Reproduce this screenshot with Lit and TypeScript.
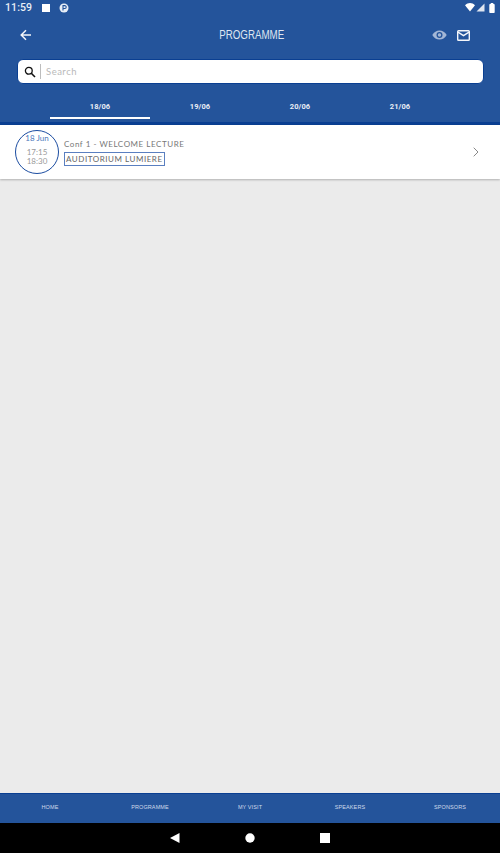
import { LitElement, html, css } from "lit";
import { customElement } from "lit/decorators.js";

@customElement("app-root")
export class AppRoot extends LitElement {
  static styles = css`
    :host { display: flex; flex-direction: column; width: 500px; height: 853px; background: #ebebeb; font-family: "Roboto", sans-serif; overflow: hidden; }
    svg { display: block; }
    .top { background: #24549b; border-bottom: 3px solid #0a3f92; height: 122px; display: flex; flex-direction: column; flex: none; }
    .status { height: 15px; display: flex; align-items: center; padding: 0 5px; color: #e8eef6; font-size: 10.5px; font-weight: 500; gap: 9px; }
    .status .time { letter-spacing: 0.1px; }
    .status .sp { flex: 1; }
    .status .right { display: flex; align-items: center; gap: 1px; }
    .sq { width: 8px; height: 8px; background: #fff; margin-left: 1px; }
    .appbar { height: 40px; display: flex; align-items: center; padding: 0 20px; position: relative; margin-top: 0; }
    .title { flex: 1; text-align: center; color: #dfe6f1; font-family: "Liberation Sans Narrow", "Liberation Sans", sans-serif; font-size: 12.5px; }
    .title span { display: inline-block; transform: scaleX(0.78); }
    .acts { display: flex; align-items: center; gap: 10px; padding-right: 10px; margin-left: -40px; }
    .search { margin: 5px 17px 0; height: 25px; background: #fff; border-radius: 6px; border: 1px solid #0a3f92; margin-top: 4px; box-sizing: border-box; width: 467px; display: flex; align-items: center; padding-left: 6px; }
    .bar { width: 1px; height: 15px; background: #bdbdbd; margin: 0 5px 0 4px; }
    .ph { font-family: "Lato", sans-serif; color: #b9b9b9; font-size: 9.5px; letter-spacing: 0.5px; }
    .tabs { display: flex; padding-left: 50px; margin-top: 15px; flex: 1; }
    .tab { width: 100px; box-sizing: border-box; text-align: center; color: #e9eef6; font-size: 7.5px; font-weight: 700; padding-top: 3px; letter-spacing: 0.1px; height: 20px; }
    .tab.on { border-bottom: 2px solid #fff; }
    .row { height: 54px; background: #fff; box-shadow: 0 1px 2px rgba(0,0,0,.25); display: flex; align-items: center; padding-left: 15px; flex: none; }
    .row { margin-top: 0; }
    .circle { width: 44px; height: 44px; box-sizing: border-box; border: 1.5px solid #1c4da1; border-radius: 50%; display: flex; flex-direction: column; align-items: center; font-family: "Lato", sans-serif; font-size: 8px; color: #999; line-height: 9px; flex: none; padding-top: 2.5px; }
    .circle .d { color: #4c78bb; margin-bottom: 5px; }
    .info { margin-left: 5px; display: flex; flex-direction: column; gap: 3px; font-family: "Lato", sans-serif; font-size: 8px; color: #777; letter-spacing: 0.55px; flex: 1; }
    .room { align-self: flex-start; border: 1px solid #5a7fc0; padding: 1px 1px; line-height: 10px; color: #666; }
    .chev { margin-right: 21px; }
    .main { flex: 1; }
    .nav { height: 30px; background: #24549b; border-top: 1px solid #0a3f92; box-sizing: border-box; display: flex; flex: none; }
    .nav div { width: 100px; text-align: center; color: #cfdaea; font-family: "Liberation Sans", sans-serif; font-size: 5.5px; line-height: 27px; letter-spacing: 0.1px; }
    .sys { height: 30px; background: #000; flex: none; display: flex; align-items: center; justify-content: center; gap: 65px; padding-left: 0; }
  `;
  render() {
    return html`
      <div class="top">
        <div class="status">
          <span class="time">11:59</span>
          <span class="sq"></span>
          <svg width="10" height="10" viewBox="0 0 10 10"><circle cx="5" cy="5" r="4.5" fill="#e8eef6"/><path d="M4 7.5V2.6h1.8a1.3 1.3 0 0 1 0 2.9H4" fill="none" stroke="#24549b" stroke-width="1.1"/></svg>
          <span class="sp"></span>
          <span class="right">
            <svg width="10" height="9" viewBox="0 0 10 9"><path d="M0 2.2C3-.6 7-.6 10 2.2L5 8.5z" fill="#fff"/></svg>
            <svg width="9" height="9" viewBox="0 0 9 9"><path d="M8.5 .5V8.5H.5z" fill="#dfe6f1"/></svg>
            <svg width="6" height="10" viewBox="0 0 6 10" style="margin-left:3px"><rect x=".3" y="1" width="5.4" height="9" rx=".8" fill="#fff"/><rect x="1.7" y="0" width="2.6" height="1.5" fill="#fff"/></svg>
          </span>
        </div>
        <div class="appbar">
          <svg width="12" height="12" viewBox="0 0 12 12"><path d="M11 6H1.6M6 1.2 1.2 6 6 10.8" fill="none" stroke="#f4f6fa" stroke-width="1.5"/></svg>
          <div class="title"><span>PROGRAMME</span></div>
          <div class="acts">
            <svg width="15" height="10" viewBox="0 0 15 10"><path d="M.3 5C2 2 4.500.5 7.500.5S13 2 14.700 5c-1.700 3-4.200 4.500-7.200 4.500S2 8 .3 5z" fill="#a4b7d6"/><circle cx="7.500" cy="5" r="3" fill="#24549b"/><circle cx="7.500" cy="5" r="1.700" fill="#a4b7d6"/></svg>
            <svg width="13" height="11" viewBox="0 0 13 11"><rect x=".7" y=".7" width="11.600" height="9.600" rx=".8" fill="none" stroke="#f4f6fa" stroke-width="1.400"/><path d="M1 2.200 6.500 5.700 12 2.200" fill="none" stroke="#f4f6fa" stroke-width="1.400"/></svg>
          </div>
        </div>
        <div class="search">
          <svg width="12" height="12" viewBox="0 0 12 12"><circle cx="4.800" cy="4.800" r="3.400" fill="none" stroke="#111" stroke-width="1.300"/><path d="M7.300 7.300 11 11" stroke="#111" stroke-width="1.600"/></svg>
          <span class="bar"></span>
          <span class="ph">Search</span>
        </div>
        <div class="tabs">
          <div class="tab on">18/06</div><div class="tab">19/06</div><div class="tab">20/06</div><div class="tab">21/06</div>
        </div>
      </div>
      <div class="row">
        <div class="circle"><span class="d">18 Jun</span><span>17:15</span><span>18:30</span></div>
        <div class="info">
          <span>Conf 1 - WELCOME LECTURE</span>
          <span class="room">AUDITORIUM LUMIERE</span>
        </div>
        <svg class="chev" width="6" height="10" viewBox="0 0 6 10"><path d="M.7.7 5 5 .7 9.300" fill="none" stroke="#888" stroke-width="1"/></svg>
      </div>
      <div class="main"></div>
      <div class="nav"><div>HOME</div><div>PROGRAMME</div><div>MY VISIT</div><div>SPEAKERS</div><div>SPONSORS</div></div>
      <div class="sys">
        <svg width="10" height="10" viewBox="0 0 10 10"><path d="M0 5 9.500 0V10z" fill="#fff"/></svg>
        <svg width="10" height="10" viewBox="0 0 10 10"><circle cx="5" cy="5" r="4.700" fill="#fff"/></svg>
        <svg width="10" height="10" viewBox="0 0 10 10"><rect width="10" height="10" fill="#fff"/></svg>
      </div>
    `;
  }
}
